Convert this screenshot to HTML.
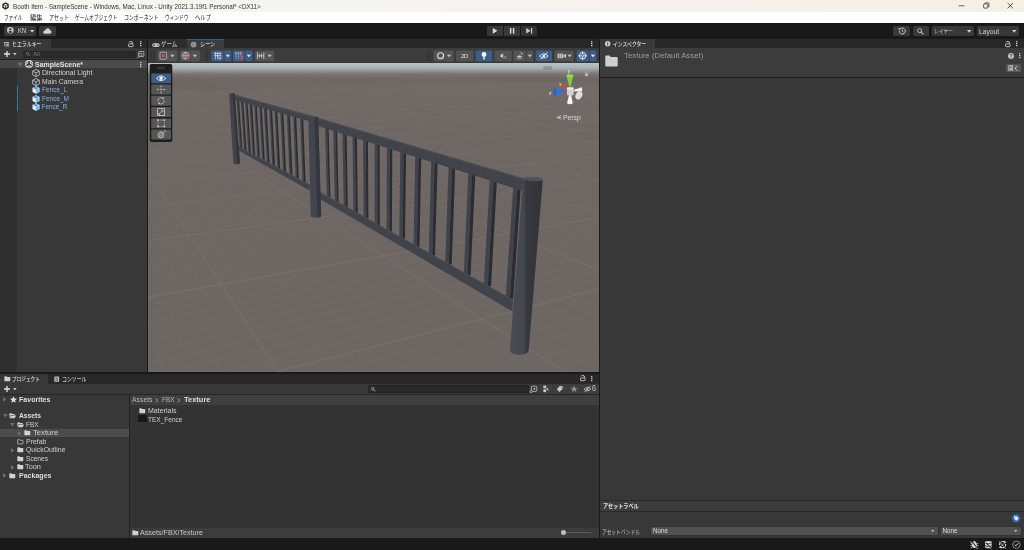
<!DOCTYPE html>
<html lang="ja"><head><meta charset="utf-8"><title>Booth Item - SampleScene - Unity</title><style>
html,body{margin:0;padding:0;background:#191919;}
body{width:1024px;height:550px;position:relative;overflow:hidden;font-family:"Liberation Sans","Noto Sans CJK JP",sans-serif;}
#app{position:absolute;left:0;top:0;width:1024px;height:550px;will-change:transform;}
.abs{position:absolute;display:block;}
.t{white-space:nowrap;transform-origin:0 50%;}
svg{overflow:visible}
</style></head><body>
<div id="app">
<div class="abs" style="left:0px;top:0px;width:1024px;height:12px;background:linear-gradient(90deg,#f6f6f2 0%,#f5f4ee 50%,#f3f0e4 100%);"></div>
<div class="abs" style="left:0px;top:12px;width:1024px;height:11px;background:#ffffff;"></div>
<svg class="abs" style="left:1.9px;top:2.2px" width="7" height="7.9" viewBox="0 0 8 9"><path d="M4 0.2L7.7 2.3V6.7L4 8.8L0.3 6.7V2.3Z" fill="#2c2c2c"/><path d="M4 2L6 3.1V5.7L4 6.9L2 5.7V3.1Z" fill="#f4f4f0"/><path d="M4 4.4V7M4 4.4L1.9 3.2M4 4.4L6.1 3.2" stroke="#2c2c2c" stroke-width="0.8" fill="none"/></svg>
<span class="abs t" style="left:12.5px;top:1.7000000000000002px;line-height:10px;font-size:6.5px;color:#333333;transform:scaleX(0.965);">Booth Item - SampleScene - Windows, Mac, Linux - Unity 2021.3.19f1 Personal* &lt;DX11&gt;</span>
<svg class="abs" style="left:0px;top:0px" width="1024" height="12" viewBox="0 0 1024 12"><path d="M958.8 5.8H964.4" stroke="#222" stroke-width="0.7"/><rect x="983.6" y="3.9" width="4.2" height="4.2" rx="0.9" fill="none" stroke="#222" stroke-width="0.7"/><path d="M985 3.9V3.4Q985 2.8 985.8 2.8H988.2Q989 2.8 989 3.6V6.2Q989 6.8 988.3 6.8H987.9" fill="none" stroke="#222" stroke-width="0.7"/><path d="M1007.6 3L1013 8.4M1013 3L1007.6 8.4" stroke="#222" stroke-width="0.75"/></svg>
<span class="abs t" style="left:4px;top:12.899999999999999px;line-height:10px;font-size:6.3px;color:#151515;transform:scaleX(0.734);">ファイル</span>
<span class="abs t" style="left:29.5px;top:12.899999999999999px;line-height:10px;font-size:6.3px;color:#151515;transform:scaleX(0.993);">編集</span>
<span class="abs t" style="left:49px;top:12.899999999999999px;line-height:10px;font-size:6.3px;color:#151515;transform:scaleX(0.798);">アセット</span>
<span class="abs t" style="left:75px;top:12.899999999999999px;line-height:10px;font-size:6.3px;color:#151515;transform:scaleX(0.752);">ゲームオブジェクト</span>
<span class="abs t" style="left:124px;top:12.899999999999999px;line-height:10px;font-size:6.3px;color:#151515;transform:scaleX(0.783);">コンポーネント</span>
<span class="abs t" style="left:165px;top:12.899999999999999px;line-height:10px;font-size:6.3px;color:#151515;transform:scaleX(0.746);">ウィンドウ</span>
<span class="abs t" style="left:195px;top:12.899999999999999px;line-height:10px;font-size:6.3px;color:#151515;transform:scaleX(0.847);">ヘルプ</span>
<div class="abs" style="left:0px;top:23px;width:1024px;height:16px;background:#191919;"></div>
<div class="abs" style="left:4px;top:26px;width:32px;height:9.9px;background:#383838;border-radius:1.5px"></div>
<svg class="abs" style="left:6.9px;top:27.3px" width="6.6" height="6.6" viewBox="0 0 6.6 6.6"><circle cx="3.3" cy="3.3" r="3.3" fill="#c8c8c8"/><circle cx="3.3" cy="2.4" r="1.15" fill="#383838"/><path d="M1.3 5.3Q1.4 3.9 3.3 3.9Q5.2 3.9 5.3 5.3Q4.4 6.1 3.3 6.1Q2.2 6.1 1.3 5.3Z" fill="#383838"/></svg>
<span class="abs t" style="left:17.7px;top:26.3px;line-height:10px;font-size:6.5px;color:#d4d4d4;transform:scaleX(0.908);">KN</span>
<svg class="abs" style="left:29.9px;top:29.8px" width="4.3" height="2.5799999999999996" viewBox="0 0 4.3 2.5799999999999996"><path d="M0 0H4.3L2.15 2.5799999999999996Z" fill="#d0d0d0"/></svg>
<div class="abs" style="left:39px;top:26px;width:16.5px;height:9.9px;background:#383838;border-radius:1.5px"></div>
<svg class="abs" style="left:42.6px;top:28.2px" width="8.8" height="6" viewBox="0 0 8.8 6"><path d="M2 5.8Q0.2 5.8 0.2 4.3Q0.2 3 1.6 2.8Q1.8 1.6 3 1.6Q3.4 0.2 5 0.2Q6.8 0.2 7 2.2Q8.6 2.3 8.6 4Q8.6 5.8 6.8 5.8Z" fill="#d0d0d0"/></svg>
<div class="abs" style="left:487px;top:26px;width:16.3px;height:9.9px;background:#383838;border-radius:1.5px 0 0 1.5px"></div>
<div class="abs" style="left:503.8px;top:26px;width:16.3px;height:9.9px;background:#383838;"></div>
<div class="abs" style="left:520.6px;top:26px;width:16.4px;height:9.9px;background:#323232;border-radius:0 1.5px 1.5px 0"></div>
<svg class="abs" style="left:0px;top:0px" width="1024" height="40" viewBox="0 0 1024 40"><path d="M492.8 27.9L497.4 30.8L492.8 33.7Z" fill="#dcdcdc"/><rect x="509.9" y="28" width="1.5" height="5.7" fill="#dcdcdc"/><rect x="512.8" y="28" width="1.5" height="5.7" fill="#dcdcdc"/><path d="M526.2 28L530.6 30.8L526.2 33.6Z" fill="#c8c8c8"/><rect x="530.9" y="28" width="1.3" height="5.6" fill="#c8c8c8"/></svg>
<div class="abs" style="left:893px;top:26px;width:17px;height:9.9px;background:#383838;border-radius:1.5px"></div>
<div class="abs" style="left:913px;top:26px;width:15.9px;height:9.9px;background:#383838;border-radius:1.5px"></div>
<svg class="abs" style="left:897.5px;top:27.2px" width="8" height="8" viewBox="0 0 8 8"><path d="M1.3 4A3 3 0 1 0 2.2 1.9" fill="none" stroke="#c8c8c8" stroke-width="1"/><path d="M0.2 1.2L2.9 1.2L1.2 3.6Z" fill="#c8c8c8"/><path d="M4.2 2.4V4.3L5.5 5" fill="none" stroke="#c8c8c8" stroke-width="0.8"/></svg>
<svg class="abs" style="left:917.2px;top:27.6px" width="7.0" height="7.0" viewBox="0 0 7 7"><circle cx="2.6" cy="2.6" r="2" fill="none" stroke="#c4c4c4" stroke-width="0.9"/><path d="M4.1 4.1L6.4 6.4" stroke="#c4c4c4" stroke-width="1.1"/></svg>
<div class="abs" style="left:932.2px;top:26px;width:41.7px;height:9.9px;background:#383838;border-radius:1.5px"></div>
<span class="abs t" style="left:934.3px;top:26.3px;line-height:10px;font-size:6.0px;color:#cccccc;transform:scaleX(0.797);">レイヤー</span>
<svg class="abs" style="left:967.4px;top:29.8px" width="4.4" height="2.64" viewBox="0 0 4.4 2.64"><path d="M0 0H4.4L2.2 2.64Z" fill="#d0d0d0"/></svg>
<div class="abs" style="left:977px;top:26px;width:41.7px;height:9.9px;background:#383838;border-radius:1.5px"></div>
<span class="abs t" style="left:978.9px;top:26.5px;line-height:10px;font-size:6.4px;color:#cccccc;transform:scaleX(1.052);">Layout</span>
<svg class="abs" style="left:1012.2px;top:29.8px" width="4.4" height="2.64" viewBox="0 0 4.4 2.64"><path d="M0 0H4.4L2.2 2.64Z" fill="#d0d0d0"/></svg>
<div class="abs" style="left:0px;top:39px;width:147px;height:333px;background:#383838;"></div>
<div class="abs" style="left:0px;top:38.9px;width:147px;height:9.5px;background:#282828;"></div>
<div class="abs" style="left:0px;top:38.9px;width:50.5px;height:9.5px;background:#383838;"></div>
<svg class="abs" style="left:4.3px;top:42.4px" width="5.4" height="4.6" viewBox="0 0 5.6 5"><path d="M0 0.7H5.4M1.8 2.5H5.4M1.8 4.3H5.4" stroke="#d4d4d4" stroke-width="1"/><path d="M0.4 1V4.3H1.8" fill="none" stroke="#d4d4d4" stroke-width="0.6"/></svg>
<span class="abs t" style="left:11.7px;top:39.1px;line-height:10px;font-size:6.0px;color:#dcdcdc;font-weight:500;transform:scaleX(0.819);">ヒエラルキー</span>
<svg class="abs" style="left:128.4px;top:41px" width="5.6" height="6.2" viewBox="0 0 5.6 6.2"><rect x="0.5" y="2.9" width="4.6" height="2.8" rx="0.7" fill="none" stroke="#c4c4c4" stroke-width="0.95"/><path d="M0.9 1.4Q1.3 0.5 2.8 0.5Q4.6 0.5 4.6 2V2.9" fill="none" stroke="#c4c4c4" stroke-width="0.95"/></svg>
<svg class="abs" style="left:139.7px;top:41px" width="1.4" height="5.8" viewBox="0 0 1.4 5.8"><rect x="0" y="0" width="1.4" height="1.25" fill="#cecece"/><rect x="0" y="2" width="1.4" height="1.25" fill="#cecece"/><rect x="0" y="4" width="1.4" height="1.25" fill="#cecece"/></svg>
<div class="abs" style="left:0px;top:48.4px;width:147px;height:11px;background:#383838;"></div>
<div class="abs" style="left:0px;top:59.3px;width:147px;height:0.7px;background:#232323;"></div>
<svg class="abs" style="left:3.9px;top:51.4px" width="6" height="6" viewBox="0 0 6 6"><path d="M3 0V6M0 3H6" stroke="#e2e2e2" stroke-width="1.3"/></svg>
<svg class="abs" style="left:12.5px;top:53.3px" width="3.7" height="2.22" viewBox="0 0 3.7 2.22"><path d="M0 0H3.7L1.85 2.22Z" fill="#cccccc"/></svg>
<div class="abs" style="left:23px;top:50.6px;width:113px;height:7.6px;background:#2a2a2a;border-radius:2px;box-shadow:0 0 0 0.5px #212121 inset"></div>
<svg class="abs" style="left:26.4px;top:52.3px" width="4.34" height="4.34" viewBox="0 0 7 7"><circle cx="2.6" cy="2.6" r="2" fill="none" stroke="#9a9a9a" stroke-width="0.9"/><path d="M4.1 4.1L6.4 6.4" stroke="#9a9a9a" stroke-width="1.1"/></svg>
<span class="abs t" style="left:33px;top:49.4px;line-height:10px;font-size:6.1px;color:#787878;">All</span>
<svg class="abs" style="left:136.5px;top:50.6px" width="7.5" height="7.5" viewBox="0 0 7.5 7.5"><rect x="1.8" y="0.5" width="5" height="5" rx="0.8" fill="none" stroke="#bdbdbd" stroke-width="0.8"/><circle cx="3.4" cy="3.9" r="1.6" fill="#383838" stroke="#bdbdbd" stroke-width="0.8"/><path d="M2.2 5.2L0.4 7" stroke="#bdbdbd" stroke-width="0.9"/></svg>
<div class="abs" style="left:0px;top:60px;width:17px;height:312px;background:#303030;"></div>
<div class="abs" style="left:0px;top:60.2px;width:147px;height:8.2px;background:#4b4b4b;"></div>
<div class="abs" style="left:0px;top:60.2px;width:17px;height:8.2px;background:#454545;"></div>
<svg class="abs" style="left:18.4px;top:62.8px" width="4.6" height="3.5" viewBox="0 0 4.6 3.5"><path d="M0 0H4.6L2.3 3.5Z" fill="#707070"/></svg>
<svg class="abs" style="left:25.2px;top:60.4px" width="8" height="8" viewBox="0 0 8 8"><circle cx="4" cy="4" r="3.9" fill="#e6e6e6"/><path d="M4 4L4 0.9M4 4L1.3 5.6M4 4L6.7 5.6" stroke="#333" stroke-width="1.5"/><circle cx="4" cy="4" r="1.2" fill="#333"/><path d="M2.2 1.6L1 3.9M5.8 1.6L7 3.9M2.6 6.9H5.4" stroke="#333" stroke-width="0.7"/></svg>
<span class="abs t" style="left:34.5px;top:59.599999999999994px;line-height:10px;font-size:6.5px;color:#e0e0e0;font-weight:700;transform:scaleX(1.071);">SampleScene*</span>
<svg class="abs" style="left:139.7px;top:62px" width="1.4" height="5.8" viewBox="0 0 1.4 5.8"><rect x="0" y="0" width="1.4" height="1.25" fill="#cecece"/><rect x="0" y="2" width="1.4" height="1.25" fill="#cecece"/><rect x="0" y="4" width="1.4" height="1.25" fill="#cecece"/></svg>
<svg class="abs" style="left:32.2px;top:69.1px" width="8" height="8" viewBox="0 0 8 8"><path d="M4 0.5L7.3 2.2V5.9L4 7.6L0.7 5.9V2.2Z" fill="none" stroke="#d6d6d6" stroke-width="0.75"/><path d="M0.7 2.2L4 3.9L7.3 2.2M4 3.9V7.6" fill="none" stroke="#d6d6d6" stroke-width="0.75"/></svg>
<span class="abs t" style="left:41.5px;top:68.3px;line-height:10px;font-size:6.4px;color:#d2d2d2;transform:scaleX(1.102);">Directional Light</span>
<svg class="abs" style="left:32.2px;top:77.6px" width="8" height="8" viewBox="0 0 8 8"><path d="M4 0.5L7.3 2.2V5.9L4 7.6L0.7 5.9V2.2Z" fill="none" stroke="#d6d6d6" stroke-width="0.75"/><path d="M0.7 2.2L4 3.9L7.3 2.2M4 3.9V7.6" fill="none" stroke="#d6d6d6" stroke-width="0.75"/></svg>
<span class="abs t" style="left:41.5px;top:76.8px;line-height:10px;font-size:6.4px;color:#d2d2d2;transform:scaleX(1.069);">Main Camera</span>
<svg class="abs" style="left:32.2px;top:86.1px" width="8" height="8" viewBox="0 0 8 8"><path d="M4 0.3L7.5 2.1V6L4 7.8L0.5 6V2.1Z" fill="#e6eef4"/><path d="M4 0.3L7.5 2.1L4 3.9L0.5 2.1Z" fill="#8fc4ea"/><path d="M4 3.9L7.5 2.1V6L4 7.8Z" fill="#6cc4f4"/><path d="M2 1.4L4 2.4L5.2 1.7" fill="none" stroke="#2a4a66" stroke-width="0.7"/></svg>
<span class="abs t" style="left:41.5px;top:85.3px;line-height:10px;font-size:6.4px;color:#83b1ea;transform:scaleX(1.025);">Fence_L</span>
<div class="abs" style="left:17.1px;top:86.39999999999999px;width:1.0px;height:7.6px;background:#2f7cad;"></div>
<svg class="abs" style="left:32.2px;top:94.6px" width="8" height="8" viewBox="0 0 8 8"><path d="M4 0.3L7.5 2.1V6L4 7.8L0.5 6V2.1Z" fill="#e6eef4"/><path d="M4 0.3L7.5 2.1L4 3.9L0.5 2.1Z" fill="#8fc4ea"/><path d="M4 3.9L7.5 2.1V6L4 7.8Z" fill="#6cc4f4"/><path d="M2 1.4L4 2.4L5.2 1.7" fill="none" stroke="#2a4a66" stroke-width="0.7"/></svg>
<span class="abs t" style="left:41.5px;top:93.8px;line-height:10px;font-size:6.4px;color:#83b1ea;transform:scaleX(1.013);">Fence_M</span>
<div class="abs" style="left:17.1px;top:94.89999999999999px;width:1.0px;height:7.6px;background:#2f7cad;"></div>
<svg class="abs" style="left:32.2px;top:103.1px" width="8" height="8" viewBox="0 0 8 8"><path d="M4 0.3L7.5 2.1V6L4 7.8L0.5 6V2.1Z" fill="#e6eef4"/><path d="M4 0.3L7.5 2.1L4 3.9L0.5 2.1Z" fill="#8fc4ea"/><path d="M4 3.9L7.5 2.1V6L4 7.8Z" fill="#6cc4f4"/><path d="M2 1.4L4 2.4L5.2 1.7" fill="none" stroke="#2a4a66" stroke-width="0.7"/></svg>
<span class="abs t" style="left:41.5px;top:102.3px;line-height:10px;font-size:6.4px;color:#83b1ea;">Fence_R</span>
<div class="abs" style="left:17.1px;top:103.39999999999999px;width:1.0px;height:7.6px;background:#2f7cad;"></div>
<div class="abs" style="left:147px;top:39px;width:1px;height:333px;background:#191919;"></div>
<div class="abs" style="left:599px;top:39px;width:1.2px;height:499px;background:#191919;"></div>
<div class="abs" style="left:0px;top:372px;width:600px;height:1.6px;background:#191919;"></div>
<div class="abs" style="left:148px;top:38.9px;width:451px;height:9.5px;background:#282828;"></div>
<div class="abs" style="left:148px;top:38.9px;width:39px;height:9.5px;background:#2d2d2d;"></div>
<div class="abs" style="left:187px;top:38.9px;width:36.9px;height:9.5px;background:#3c3c3c;"></div>
<div class="abs" style="left:187px;top:38.9px;width:36.9px;height:0.7px;background:#2f5d90;"></div>
<svg class="abs" style="left:151.6px;top:42.5px" width="7.8" height="4.5" viewBox="0 0 8.6 5"><rect x="0.2" y="0.4" width="8.2" height="4" rx="2" fill="#c8c8c8"/><circle cx="2.2" cy="2.4" r="0.9" fill="#2d2d2d"/><circle cx="6.3" cy="2.4" r="0.7" fill="#2d2d2d"/></svg>
<span class="abs t" style="left:160.8px;top:39.3px;line-height:10px;font-size:6.0px;color:#c8c8c8;font-weight:500;transform:scaleX(0.909);">ゲーム</span>
<svg class="abs" style="left:191.3px;top:41.7px" width="5.2" height="5.2" viewBox="0 0 5.8 5.8"><rect x="0.4" y="0.4" width="5" height="5" rx="1.6" fill="none" stroke="#c8c8c8" stroke-width="0.8"/><path d="M0.4 2.2H5.4M0.4 3.7H5.4M2.2 0.4V5.4M3.7 0.4V5.4" stroke="#c8c8c8" stroke-width="0.6"/></svg>
<span class="abs t" style="left:199.8px;top:39.3px;line-height:10px;font-size:6.0px;color:#d8d8d8;font-weight:500;transform:scaleX(0.859);">シーン</span>
<svg class="abs" style="left:591.0px;top:41px" width="1.4" height="5.8" viewBox="0 0 1.4 5.8"><rect x="0" y="0" width="1.4" height="1.25" fill="#cecece"/><rect x="0" y="2" width="1.4" height="1.25" fill="#cecece"/><rect x="0" y="4" width="1.4" height="1.25" fill="#cecece"/></svg>
<div class="abs" style="left:148px;top:48.4px;width:451px;height:14.2px;background:#3c3c3c;"></div>
<div class="abs" style="left:148px;top:62.6px;width:451px;height:0.6px;background:#232323;"></div>
<svg class="abs" style="left:148px;top:49px" width="451" height="14" viewBox="148 49 451 14"><rect x="150.8" y="51" width="0.7" height="9.6" fill="#2c2c2c"/><rect x="153" y="51" width="0.7" height="9.6" fill="#2c2c2c"/><rect x="205.2" y="51" width="0.7" height="9.6" fill="#2c2c2c"/><rect x="207.4" y="51" width="0.7" height="9.6" fill="#2c2c2c"/><rect x="427.6" y="51" width="0.7" height="9.6" fill="#2c2c2c"/><rect x="429.6" y="51" width="0.7" height="9.6" fill="#2c2c2c"/><rect x="157.4" y="50.4" width="20.0" height="10.8" rx="1.2" fill="#535353"/><rect x="160" y="52.2" width="6.6" height="7" rx="0.8" fill="none" stroke="#c8c8c8" stroke-width="0.7"/><rect x="161.9" y="54.3" width="2.8" height="2.8" fill="#d0593f"/><path d="M170.3 54.699999999999996H174.5L172.4 57.199999999999996Z" fill="#c8c8c8"/><rect x="179.9" y="50.4" width="20.0" height="10.8" rx="1.2" fill="#535353"/><circle cx="185.6" cy="55.7" r="3.5" fill="none" stroke="#c8c8c8" stroke-width="0.7"/><path d="M185.6 52.2V59.2M182.1 55.7H189" stroke="#c8c8c8" stroke-width="0.6"/><ellipse cx="185.6" cy="55.7" rx="1.7" ry="3.5" fill="none" stroke="#c8c8c8" stroke-width="0.5"/><circle cx="187.8" cy="57.6" r="1.6" fill="#d0593f"/><path d="M192.8 54.699999999999996H197.0L194.9 57.199999999999996Z" fill="#c8c8c8"/><rect x="211.5" y="50.4" width="12.2" height="10.8" rx="1.2" fill="#3d5c87"/><rect x="224.4" y="50.4" width="6.8" height="10.8" rx="1.2" fill="#3d5c87"/><path d="M214 53.4H221.4M214 55.6H221.4M215.4 52V59.4M217.7 52V59.4M220 52V57" stroke="#dfe6ee" stroke-width="0.7"/><path d="M218.4 56.8L220 59.4L221.6 56.8" fill="none" stroke="#dfe6ee" stroke-width="0.8"/><path d="M225.70000000000002 54.699999999999996H229.9L227.8 57.199999999999996Z" fill="#dfe6ee"/><rect x="233" y="50.4" width="11.4" height="10.8" rx="1.2" fill="#3d5c87"/><rect x="245.1" y="50.4" width="7.5" height="10.8" rx="1.2" fill="#3d5c87"/><path d="M236 52V59.4M238.4 52V59.4M240.8 52V55" stroke="#dfe6ee" stroke-width="0.7" stroke-dasharray="1 0.8"/><path d="M235 53.2H242.4" stroke="#dfe6ee" stroke-width="0.7" stroke-dasharray="1 0.8"/><path d="M239.6 56.2Q242.6 55.2 242.6 57.4Q242.6 59.4 239.8 58.8" fill="none" stroke="#e0573c" stroke-width="1.1"/><path d="M246.8 54.699999999999996H251.0L248.9 57.199999999999996Z" fill="#dfe6ee"/><rect x="254.9" y="50.4" width="19.4" height="10.8" rx="1.2" fill="#535353"/><path d="M257.4 52.4V59.2M263.8 52.4V59.2M257.4 55.8H263.8" stroke="#c8c8c8" stroke-width="0.9"/><path d="M259.4 53.6V58M261.6 53.6V58" stroke="#c8c8c8" stroke-width="0.8"/><path d="M267.5 54.699999999999996H271.70000000000005L269.6 57.199999999999996Z" fill="#c8c8c8"/><rect x="433.8" y="50.4" width="19.8" height="10.8" rx="1.2" fill="#535353"/><circle cx="440.6" cy="55.8" r="3" fill="none" stroke="#e0e0e0" stroke-width="1.1"/><path d="M438.4 57.6Q440.8 58.6 442.8 56.6" stroke="#9a9a9a" stroke-width="1" fill="none"/><path d="M446.9 54.699999999999996H451.1L449 57.199999999999996Z" fill="#c8c8c8"/><rect x="456.1" y="50.4" width="17.2" height="10.8" rx="1.2" fill="#535353"/><rect x="475.6" y="50.4" width="16.6" height="10.8" rx="1.2" fill="#3d5c87"/><path d="M484 52Q486.4 52 486.4 54.4Q486.4 55.6 485.2 56.6V57.6H482.8V56.6Q481.6 55.6 481.6 54.4Q481.6 52 484 52Z" fill="#f0f4f8"/><rect x="483" y="58.2" width="2" height="1.2" fill="#f0f4f8"/><rect x="494.5" y="50.4" width="17.2" height="10.8" rx="1.2" fill="#535353"/><path d="M500.4 54.6H501.6L503.2 53.2V58.4L501.6 57H500.4Z" fill="#c8c8c8"/><path d="M504.4 56.4L506.2 58.4M506.2 56.4L504.4 58.4" stroke="#c8c8c8" stroke-width="0.6"/><rect x="513.4" y="50.4" width="12.4" height="10.8" rx="1.2" fill="#535353"/><rect x="526.5" y="50.4" width="6.6" height="10.8" rx="1.2" fill="#535353"/><path d="M516.6 56.6L519.4 55.2L522.4 56.6L519.4 58Z" fill="#c8c8c8"/><path d="M516.6 58L519.4 59.4L522.4 58" fill="none" stroke="#c8c8c8" stroke-width="0.6"/><path d="M520.6 52L521.2 53.4L522.6 53.6L521.4 54.4" stroke="#c8c8c8" stroke-width="0.7" fill="none"/><path d="M527.6999999999999 54.699999999999996H531.9L529.8 57.199999999999996Z" fill="#c8c8c8"/><rect x="535.7" y="50.4" width="16.3" height="10.8" rx="1.2" fill="#3d5c87"/><path d="M539.6 56Q543.8 51.6 548 56Q543.8 60.2 539.6 56Z" fill="none" stroke="#eef2f6" stroke-width="0.9"/><circle cx="543.8" cy="56" r="1.3" fill="#eef2f6"/><path d="M540.4 59.4L547.4 52.2" stroke="#eef2f6" stroke-width="0.9"/><rect x="554.6" y="50.4" width="19.0" height="10.8" rx="1.2" fill="#535353"/><rect x="557.6" y="53.6" width="5.6" height="4.6" fill="#c8c8c8"/><path d="M563.6 55.2L566 53.8V58L563.6 56.6Z" fill="#c8c8c8"/><path d="M559.4 53.6V58.2M561.2 53.6V58.2" stroke="#585858" stroke-width="0.5"/><path d="M567.5 54.699999999999996H571.7L569.6 57.199999999999996Z" fill="#c8c8c8"/><rect x="576.6" y="50.4" width="12.1" height="10.8" rx="1.2" fill="#3d5c87"/><rect x="589.5" y="50.4" width="7.0" height="10.8" rx="1.2" fill="#3d5c87"/><circle cx="582.6" cy="55.8" r="3.2" fill="none" stroke="#eef2f6" stroke-width="0.9"/><path d="M582.6 51.4V60.2M578.2 55.8H587" stroke="#eef2f6" stroke-width="0.8"/><circle cx="582.6" cy="55.8" r="1" fill="#3d5c87" stroke="#eef2f6" stroke-width="0.6"/><path d="M590.9 54.699999999999996H595.1L593 57.199999999999996Z" fill="#eef2f6"/></svg><span class="abs t" style="left:460.9px;top:50.9px;line-height:10px;font-size:5.8px;color:#e4e4e4">2D</span>
<svg class="abs" style="left:148px;top:63px" width="451" height="309" viewBox="148 63 451 309">
<defs><linearGradient id="sky" x1="0" y1="0" x2="0" y2="1"><stop offset="0" stop-color="#b8c3c4"/><stop offset="0.3" stop-color="#aab2b3"/><stop offset="0.5" stop-color="#8f9393"/><stop offset="0.7" stop-color="#787372"/><stop offset="1" stop-color="#6d6663"/></linearGradient><linearGradient id="gfade" x1="0" y1="63" x2="0" y2="372" gradientUnits="userSpaceOnUse"><stop offset="0" stop-color="#fff" stop-opacity="0"/><stop offset="0.1" stop-color="#fff" stop-opacity="0.2"/><stop offset="0.35" stop-color="#fff" stop-opacity="0.6"/><stop offset="0.75" stop-color="#fff" stop-opacity="1"/><stop offset="1" stop-color="#fff" stop-opacity="1"/></linearGradient><mask id="gm" maskUnits="userSpaceOnUse" x="148" y="63" width="451" height="309"><rect x="148" y="63" width="451" height="309" fill="url(#gfade)"/></mask><linearGradient id="post" x1="0" y1="0" x2="1" y2="0"><stop offset="0" stop-color="#484b53"/><stop offset="0.42" stop-color="#44474f"/><stop offset="0.5" stop-color="#36383f"/><stop offset="1" stop-color="#313338"/></linearGradient></defs>
<rect x="148" y="63" width="451" height="309" fill="#6d6663"/>
<rect x="148" y="63" width="451" height="16" fill="url(#sky)"/>
<g mask="url(#gm)"><path d="M69.1 58.9L-2877.0 598.2M69.1 58.9L-2875.3 607.1M69.1 58.9L-2873.6 616.3M69.1 58.9L-2871.8 625.7M69.1 59.0L-2869.9 635.5M69.1 59.0L-2867.9 645.6M69.1 59.0L-2865.8 656.1M69.1 59.0L-2861.2 678.2M69.1 59.1L-2858.7 689.9M69.1 59.1L-2856.1 702.0M69.1 59.1L-2853.3 714.5M69.1 59.1L-2850.3 727.6M69.1 59.1L-2847.2 741.1M69.1 59.2L-2843.9 755.2M69.1 59.2L-2840.3 769.9M69.1 59.2L-2836.5 785.2M69.2 59.3L-2828.2 817.7M69.2 59.3L-2823.6 835.1M69.2 59.3L-2818.7 853.2M69.2 59.4L-2813.4 872.2M69.2 59.4L-2807.7 892.0M69.2 59.4L-2801.6 912.8M69.2 59.5L-2795.1 934.7M69.2 59.5L-2788.0 957.6M69.2 59.5L-2780.3 981.6M69.3 59.6L-2762.9 1033.6M69.3 59.7L-2753.1 1061.8M69.3 59.7L-2742.4 1091.4M69.3 59.8L-2730.7 1122.8M69.3 59.8L-2717.9 1155.9M1502.1 62.5L2788.5 2767.2M69.4 59.9L-2703.8 1191.1M1501.4 62.8L2363.5 2931.0M69.4 60.0L-2688.3 1228.3M1500.6 63.0L1873.6 3034.6M69.4 60.0L-2671.2 1267.8M1499.8 63.0L1351.6 3054.3M69.5 60.1L-2652.3 1309.8M1498.9 62.9L842.6 2985.1M69.5 60.2L-2608.0 1402.1M1497.5 62.3L5.2 2659.1M69.6 60.3L-2582.0 1452.8M1497.0 62.0L-299.6 2458.3M69.6 60.4L-2552.9 1507.0M1496.6 61.7L-536.8 2260.6M69.7 60.5L-2520.2 1564.8M1496.3 61.4L-719.6 2076.2M69.7 60.6L-2483.3 1626.5M1496.1 61.1L-860.4 1909.6M69.8 60.7L-2441.7 1692.4M1495.9 60.8L-969.6 1761.3M69.9 60.8L-2394.5 1762.8M1495.7 60.6L-1054.9 1630.3M70.0 61.0L-2340.9 1837.9M1495.6 60.4L-1122.5 1514.9M70.1 61.1L-2279.8 1918.0M1495.5 60.3L-1176.5 1413.2M70.3 61.4L-2130.1 2093.1M1495.4 60.0L-1255.9 1243.3M70.5 61.6L-2038.6 2188.0M1495.4 59.9L-1285.5 1172.1M70.7 61.7L-1933.6 2287.3M1495.3 59.8L-1310.1 1108.4M70.9 61.9L-1813.3 2390.0M1495.3 59.7L-1330.8 1051.2M71.1 62.1L-1675.8 2494.8M1495.3 59.6L-1348.4 999.5M71.3 62.2L-1519.4 2599.9M1495.2 59.5L-1363.5 952.7M71.6 62.4L-1342.4 2702.6M1495.2 59.4L-1376.4 910.2M72.0 62.6L-1144.3 2799.5M1495.2 59.4L-1387.6 871.3M72.3 62.7L-925.0 2886.8M1495.2 59.3L-1397.4 835.7M73.2 62.9L-430.7 3015.2M1495.1 59.2L-1413.6 772.9M73.6 63.0L-163.5 3048.6M1495.1 59.1L-1420.3 745.0M74.1 63.0L109.4 3057.8M1495.1 59.1L-1426.2 719.2M74.5 63.0L381.5 3042.2M1495.1 59.1L-1431.5 695.2M75.0 62.9L646.1 3002.9M1495.1 59.0L-1436.3 672.8M75.4 62.8L897.6 2942.7M1495.1 59.0L-1440.6 652.0M75.8 62.7L1131.7 2865.4M1495.1 59.0L-1444.5 632.4M76.1 62.5L1345.6 2775.2M1495.1 58.9L-1448.0 614.1M76.4 62.4L1538.3 2676.4M1495.1 58.9L-1451.2 596.9M77.0 62.0L1861.2 2467.6M1495.1 58.8L-1456.8 565.5M77.2 61.8L1994.0 2363.1M1495.1 58.8L-1459.2 551.1M77.4 61.7L2110.1 2261.2M1495.1 58.8L-1461.4 537.5M77.6 61.5L2211.5 2163.0M1495.1 58.8L-1463.5 524.6M77.7 61.4L2299.9 2069.4M1495.1 58.8L-1465.4 512.4M77.8 61.2L2377.0 1980.6M1495.1 58.7L-1467.1 500.8M78.0 61.1L2444.4 1896.8M1495.1 58.7L-1468.8 489.7M78.0 60.9L2503.5 1818.0M1495.0 58.7L-1470.3 479.2M78.1 60.8L2555.3 1744.1M1495.0 58.7L-1471.7 469.2M78.3 60.6L2641.3 1610.1M1495.0 58.7L-1474.2 450.6M78.3 60.5L2677.0 1549.4M1495.0 58.6L-1475.3 441.8M78.4 60.4L2708.7 1492.6M1495.0 58.6L-1476.4 433.5M78.4 60.3L2737.0 1439.4M1495.0 58.6L-1477.4 425.5M78.5 60.2L2762.3 1389.5M1495.0 58.6L-1478.3 417.9M78.5 60.1L2785.0 1342.7M1495.0 58.6L-1479.2 410.5M78.6 60.1L2805.4 1298.7M1495.0 58.6L-1480.0 403.4M78.6 60.0L2823.8 1257.4M1495.0 58.6L-1480.8 396.7M78.6 59.9L2840.5 1218.5M1495.0 58.6L-1481.6 390.1M78.7 59.8L2869.3 1147.2M1495.0 58.5L-1482.9 377.8M78.7 59.8L2881.8 1114.5M1495.0 58.5L-1483.5 372.0M78.7 59.7L2893.2 1083.6M1495.0 58.5L-1484.1 366.4M78.7 59.7L2903.7 1054.3M1495.0 58.5L-1484.7 361.0M78.7 59.6L2913.3 1026.6M1495.0 58.5L-1485.2 355.7M78.7 59.6L2922.2 1000.3M1495.0 58.5L-1485.7 350.7M78.8 59.5L2930.3 975.3M1495.0 58.5L-1486.2 345.8M78.8 59.5L2937.8 951.5M1495.0 58.5L-1486.6 341.0M78.8 59.5L2944.8 928.9M1495.0 58.5L-1487.0 336.5M78.8 59.4L2957.2 886.8M1495.0 58.4L-1487.8 327.7M78.8 59.3L2962.8 867.2M1495.0 58.4L-1488.2 323.6M78.8 59.3L2968.0 848.4M1495.0 58.4L-1488.6 319.5M78.8 59.3L2972.8 830.5M1495.0 58.4L-1488.9 315.6M78.8 59.3L2977.4 813.3M1495.0 58.4L-1489.2 311.8M78.8 59.2L2981.6 796.9M1495.0 58.4L-1489.6 308.1M78.9 59.2L2985.5 781.1M1495.0 58.4L-1489.9 304.5M78.9 59.2L2989.3 766.0M1495.0 58.4L-1490.1 301.1M78.9 59.2L2992.7 751.5M1495.0 58.4L-1490.4 297.7M78.9 59.1L2999.1 724.1M1495.0 58.4L-1490.9 291.2M78.9 59.1L3002.0 711.2M1495.0 58.4L-1491.2 288.0M78.9 59.1L3004.8 698.8M1495.0 58.4L-1491.4 285.0M78.9 59.0L3007.4 686.8M1495.0 58.4L-1491.6 282.0M78.9 59.0L3009.8 675.3M1495.0 58.4L-1491.8 279.2M78.9 59.0L3012.1 664.1M1495.0 58.4L-1492.0 276.4M78.9 59.0L3014.3 653.4M1495.0 58.4L-1492.2 273.6M78.9 59.0L3016.4 643.0M1495.0 58.4L-1492.4 270.9M78.9 59.0L3018.4 633.0M1495.0 58.4L-1492.6 268.3M78.9 58.9L3022.1 613.9M1495.0 58.3L-1493.0 263.3M78.9 58.9L3023.8 604.8M1495.0 58.3L-1493.1 260.9M78.9 58.9L3025.4 596.0M1495.0 58.3L-1493.3 258.5M78.9 58.9L3026.9 587.5M1495.0 58.3L-1493.4 256.2M78.9 58.9L3028.4 579.2M1495.0 58.3L-1493.6 253.9M78.9 58.9L3029.8 571.2M1495.0 58.3L-1493.7 251.7M78.9 58.8L3031.1 563.4M1495.0 58.3L-1493.9 249.6M78.9 58.8L3032.4 555.9M1495.0 58.3L-1494.0 247.5M78.9 58.8L3033.6 548.5M1495.0 58.3L-1494.1 245.4M78.9 58.8L3035.9 534.5M1495.0 58.3L-1494.4 241.4M78.9 58.8L3037.0 527.8M1495.0 58.3L-1494.5 239.4M78.9 58.8L3038.0 521.2M1495.0 58.3L-1494.6 237.5M78.9 58.8L3039.0 514.9M1495.0 58.3L-1494.7 235.7M78.9 58.8L3040.0 508.7M1495.0 58.3L-1494.8 233.9M78.9 58.7L3040.9 502.7M1495.0 58.3L-1494.9 232.1M78.9 58.7L3041.7 496.8M1495.0 58.3L-1495.0 230.3M78.9 58.7L3042.6 491.1M1495.0 58.3L-1495.1 228.6M78.9 58.7L3043.4 485.5M1495.0 58.3L-1495.2 226.9M79.0 58.7L3044.9 474.8M1495.0 58.3L-1495.4 223.7M79.0 58.7L3045.6 469.6M1495.0 58.3L-1495.5 222.1M79.0 58.7L3046.3 464.6M1495.0 58.3L-1495.6 220.5M79.0 58.7L3047.0 459.6M1495.0 58.3L-1495.7 219.0M79.0 58.7L3047.6 454.8M1495.0 58.3L-1495.8 217.5M79.0 58.7L3048.3 450.2M1495.0 58.3L-1495.8 216.1M79.0 58.6L3048.9 445.6M1495.0 58.3L-1495.9 214.6M79.0 58.6L3049.4 441.1M1495.0 58.3L-1496.0 213.2M79.0 58.6L3050.0 436.7M1495.0 58.3L-1496.1 211.8M79.0 58.6L3051.1 428.3M1495.0 58.3L-1496.2 209.1M79.0 58.6L3051.6 424.2M1495.0 58.2L-1496.3 207.8M79.0 58.6L3052.1 420.2M1495.0 58.2L-1496.3 206.5M79.0 58.6L3052.5 416.2M1495.0 58.2L-1496.4 205.2M79.0 58.6L3053.0 412.4M1495.0 58.2L-1496.4 204.0M79.0 58.6L3053.4 408.7M1495.0 58.2L-1496.5 202.7M79.0 58.6L3053.9 405.0M1495.0 58.2L-1496.6 201.5M79.0 58.6L3054.3 401.4M1495.0 58.2L-1496.6 200.3M79.0 58.6L3054.7 397.9M1495.0 58.2L-1496.7 199.2M79.0 58.6L3055.5 391.0M1495.0 58.2L-1496.8 196.9M79.0 58.5L3055.8 387.7M1495.0 58.2L-1496.8 195.8M79.0 58.5L3056.2 384.4M1495.0 58.2L-1496.9 194.7M79.0 58.5L3056.5 381.3M1495.0 58.2L-1496.9 193.6M79.0 58.5L3056.9 378.1M1495.0 58.2L-1497.0 192.5M79.0 58.5L3057.2 375.1M1495.0 58.2L-1497.0 191.5M79.0 58.5L3057.5 372.0M1495.0 58.2L-1497.1 190.4M79.0 58.5L3057.8 369.1M1495.0 58.2L-1497.1 189.4M79.0 58.5L3058.1 366.2M1495.0 58.2L-1497.2 188.4M79.0 58.5L3058.7 360.5M1495.0 58.2L-1497.2 186.5M79.0 58.5L3059.0 357.8M1495.0 58.2L-1497.3 185.5M79.0 58.5L3059.3 355.1M1495.0 58.2L-1497.3 184.6M79.0 58.5L3059.5 352.5M1495.0 58.2L-1497.4 183.6M79.0 58.5L3059.8 349.9M1495.0 58.2L-1497.4 182.7M79.0 58.5L3060.0 347.3M1495.0 58.2L-1497.4 181.8M79.0 58.5L3060.3 344.8M1495.0 58.2L-1497.5 180.9M79.0 58.5L3060.5 342.3M1495.0 58.2L-1497.5 180.1M79.0 58.5L3060.7 339.9M1495.0 58.2L-1497.6 179.2M79.0 58.5L3061.2 335.2M1495.0 58.2L-1497.6 177.5M79.0 58.5L3061.4 332.9M1495.0 58.2L-1497.7 176.7M79.0 58.5L3061.6 330.6M1495.0 58.2L-1497.7 175.9M79.0 58.5L3061.8 328.4M1495.0 58.2L-1497.7 175.1M79.0 58.4L3062.0 326.2M1495.0 58.2L-1497.7 174.3M79.0 58.4L3062.2 324.0M1495.0 58.2L-1497.8 173.5M79.0 58.4L3062.4 321.9M1495.0 58.2L-1497.8 172.7M79.0 58.4L3062.6 319.8M1495.0 58.2L-1497.8 172.0M79.0 58.4L3062.7 317.7M1495.0 58.2L-1497.9 171.2M79.0 58.4L3063.1 313.7M1495.0 58.2L-1497.9 169.7M79.0 58.4L3063.3 311.7M1495.0 58.2L-1497.9 169.0M79.0 58.4L3063.4 309.8M1495.0 58.2L-1498.0 168.3M79.0 58.4L3063.6 307.9M1495.0 58.2L-1498.0 167.6M79.0 58.4L3063.7 306.0M1495.0 58.2L-1498.0 166.9M79.0 58.4L3063.9 304.2M1495.0 58.2L-1498.0 166.2M79.0 58.4L3064.0 302.3M1495.0 58.2L-1498.1 165.5M79.0 58.4L3064.2 300.5M1495.0 58.2L-1498.1 164.9M79.0 58.4L3064.3 298.8M1495.0 58.2L-1498.1 164.2M79.0 58.4L3064.6 295.3M1495.0 58.2L-1498.2 162.9M79.0 58.4L3064.7 293.6M1495.0 58.2L-1498.2 162.3M79.0 58.4L3064.9 291.9M1495.0 58.2L-1498.2 161.6M79.0 58.4L3065.0 290.3M1495.0 58.2L-1498.2 161.0M79.0 58.4L3065.1 288.7M1495.0 58.2L-1498.3 160.4M79.0 58.4L3065.2 287.1M1495.0 58.2L-1498.3 159.8M79.0 58.4L3065.4 285.5M1495.0 58.2L-1498.3 159.2M79.0 58.4L3065.5 283.9M1495.0 58.2L-1498.3 158.6M79.0 58.4L3065.6 282.4M1495.0 58.2L-1498.3 158.0M79.0 58.4L3065.8 279.4M1495.0 58.2L-1498.4 156.9M79.0 58.4L3065.9 277.9M1495.0 58.2L-1498.4 156.3M79.0 58.4L3066.0 276.4M1495.0 58.2L-1498.4 155.7M79.0 58.4L3066.1 275.0M1495.0 58.2L-1498.4 155.2M79.0 58.4L3066.2 273.6M1495.0 58.2L-1498.4 154.6M79.0 58.4L3066.3 272.2M1495.0 58.2L-1498.5 154.1M79.0 58.4L3066.4 270.8M1495.0 58.2L-1498.5 153.5M79.0 58.4L3066.5 269.4M1495.0 58.2L-1498.5 153.0M79.0 58.4L3066.6 268.1M1495.0 58.2L-1498.5 152.5M79.0 58.3L3066.8 265.4M1495.0 58.2L-1498.5 151.5M79.0 58.3L3066.9 264.1M1495.0 58.2L-1498.6 151.0M79.0 58.3L3067.0 262.9M1495.0 58.2L-1498.6 150.5M79.0 58.3L3067.1 261.6M1495.0 58.2L-1498.6 150.0M79.0 58.3L3067.2 260.3M1495.0 58.2L-1498.6 149.5M79.0 58.3L3067.3 259.1M1495.0 58.2L-1498.6 149.0M79.0 58.3L3067.3 257.9M1495.0 58.2L-1498.6 148.5M79.0 58.3L3067.4 256.7M1495.0 58.2L-1498.6 148.0M79.0 58.3L3067.5 255.5M1495.0 58.1L-1498.7 147.6M79.0 58.3L3067.6 253.2M1495.0 58.1L-1498.7 146.6M79.0 58.3L3067.7 252.0M1495.0 58.1L-1498.7 146.2M79.0 58.3L3067.8 250.9M1495.0 58.1L-1498.7 145.7M79.0 58.3L3067.9 249.8M1495.0 58.1L-1498.7 145.3M79.0 58.3L3067.9 248.6M1495.0 58.1L-1498.7 144.8M79.0 58.3L3068.0 247.5M1495.0 58.1L-1498.8 144.4M79.0 58.3L3068.1 246.5M1495.0 58.1L-1498.8 144.0M79.0 58.3L3068.1 245.4M1495.0 58.1L-1498.8 143.5M79.0 58.3L3068.2 244.3M1495.0 58.1L-1498.8 143.1M79.0 58.3L3068.3 242.2M1495.0 58.1L-1498.8 142.3M79.0 58.3L3068.4 241.2M1495.0 58.1L-1498.8 141.9M79.0 58.3L3068.5 240.2M1495.0 58.1L-1498.8 141.5M79.0 58.3L3068.5 239.2M1495.0 58.1L-1498.9 141.1M79.0 58.3L3068.6 238.2M1495.0 58.1L-1498.9 140.7M79.0 58.3L3068.6 237.2M1495.0 58.1L-1498.9 140.3M79.0 58.3L3068.7 236.3M1495.0 58.1L-1498.9 139.9M79.0 58.3L3068.8 235.3M1495.0 58.1L-1498.9 139.5M79.0 58.3L3068.8 234.4M1495.0 58.1L-1498.9 139.1M79.0 58.3L3068.9 232.5M1495.0 58.1L-1498.9 138.3M79.0 58.3L3069.0 231.6M1495.0 58.1L-1498.9 138.0M79.0 58.3L3069.0 230.7M1495.0 58.1L-1498.9 137.6M79.0 58.3L3069.1 229.8M1495.0 58.1L-1499.0 137.2M79.0 58.3L3069.1 228.9M1495.0 58.1L-1499.0 136.8M79.0 58.3L3069.2 228.0M1495.0 58.1L-1499.0 136.5M79.0 58.3L3069.2 227.1M1495.0 58.1L-1499.0 136.1M79.0 58.3L3069.3 226.2M1495.0 58.1L-1499.0 135.8M79.0 58.3L3069.3 225.4M1495.0 58.1L-1499.0 135.4M79.0 58.3L3069.4 223.7M1495.0 58.1L-1499.0 134.7M79.0 58.3L3069.5 222.9M1495.0 58.1L-1499.0 134.4M79.0 58.3L3069.5 222.1M1495.0 58.1L-1499.0 134.1M79.0 58.3L3069.6 221.2M1495.0 58.1L-1499.0 133.7M79.0 58.3L3069.6 220.4M1495.0 58.1L-1499.1 133.4M79.0 58.3L3069.6 219.6M1495.0 58.1L-1499.1 133.1M79.0 58.3L3069.7 218.9M1495.0 58.1L-1499.1 132.7M79.0 58.3L3069.7 218.1M1495.0 58.1L-1499.1 132.4M79.0 58.3L3069.8 217.3M1495.0 58.1L-1499.1 132.1" stroke="#fff" stroke-opacity="0.045" stroke-width="0.6" fill="none"/><path d="M69.1 59.0L-2863.5 667.0M69.2 59.2L-2832.5 801.1M69.3 59.6L-2772.0 1007.0M69.5 60.2L-2631.4 1354.5M1498.1 62.6L386.7 2843.8M70.2 61.2L-2210.0 2003.1M1495.5 60.1L-1220.2 1323.2M72.7 62.8L-686.1 2960.1M1495.2 59.2L-1406.0 803.0M76.7 62.2L1709.8 2572.8M1495.1 58.9L-1454.1 580.8M78.2 60.7L2601.0 1674.9M1495.0 58.7L-1473.0 459.7M78.6 59.9L2855.6 1181.8M1495.0 58.5L-1482.2 383.9M78.8 59.4L2951.3 907.4M1495.0 58.5L-1487.5 332.0M78.9 59.1L2996.0 737.6M1495.0 58.4L-1490.7 294.4M78.9 58.9L3020.3 623.3M1495.0 58.3L-1492.8 265.8M78.9 58.8L3034.8 541.4M1495.0 58.3L-1494.3 243.4M79.0 58.7L3044.2 480.1M1495.0 58.3L-1495.3 225.3M79.0 58.6L3050.5 432.4M1495.0 58.3L-1496.1 210.4M79.0 58.6L3055.1 394.4M1495.0 58.2L-1496.7 198.0M79.0 58.5L3058.4 363.3M1495.0 58.2L-1497.2 187.4M79.0 58.5L3061.0 337.5M1495.0 58.2L-1497.6 178.4M79.0 58.4L3062.9 315.7M1495.0 58.2L-1497.9 170.5M79.0 58.4L3064.5 297.0M1495.0 58.2L-1498.1 163.5M79.0 58.4L3065.7 280.9M1495.0 58.2L-1498.4 157.4M79.0 58.3L3066.7 266.8M1495.0 58.2L-1498.5 152.0M79.0 58.3L3067.6 254.3M1495.0 58.1L-1498.7 147.1M79.0 58.3L3068.3 243.3M1495.0 58.1L-1498.8 142.7M79.0 58.3L3068.9 233.4M1495.0 58.1L-1498.9 138.7M79.0 58.3L3069.4 224.5M1495.0 58.1L-1499.0 135.1" stroke="#fff" stroke-opacity="0.105" stroke-width="0.8" fill="none"/></g>
<polygon points="232.3,98.7 233.3,98.7 236.6,146.4 235.7,146.4" fill="#40434a"/>
<polygon points="233.3,98.7 234.7,98.7 238.0,146.4 236.6,146.4" fill="#2a2c31"/>
<polygon points="236.6,99.9 237.6,99.9 240.9,148.7 239.9,148.7" fill="#40434a"/>
<polygon points="237.6,99.9 239.0,99.9 242.3,148.7 240.9,148.7" fill="#2a2c31"/>
<polygon points="240.9,101.1 241.9,101.1 245.2,151.0 244.1,151.0" fill="#40434a"/>
<polygon points="241.9,101.1 243.3,101.1 246.6,151.0 245.2,151.0" fill="#2a2c31"/>
<polygon points="245.2,102.4 246.2,102.4 249.4,153.3 248.4,153.3" fill="#40434a"/>
<polygon points="246.2,102.4 247.6,102.4 250.9,153.3 249.4,153.3" fill="#2a2c31"/>
<polygon points="249.4,103.6 250.5,103.6 253.7,155.6 252.6,155.6" fill="#40434a"/>
<polygon points="250.5,103.6 252.0,103.6 255.2,155.6 253.7,155.6" fill="#2a2c31"/>
<polygon points="254.2,104.9 255.3,104.9 258.4,158.2 257.3,158.2" fill="#40434a"/>
<polygon points="255.3,104.9 256.8,104.9 259.9,158.2 258.4,158.2" fill="#2a2c31"/>
<polygon points="259.1,106.3 260.2,106.3 263.3,160.8 262.2,160.8" fill="#40434a"/>
<polygon points="260.2,106.3 261.7,106.3 264.8,160.8 263.3,160.8" fill="#2a2c31"/>
<polygon points="263.8,107.7 265.0,107.7 268.0,163.3 266.9,163.3" fill="#40434a"/>
<polygon points="265.0,107.7 266.6,107.7 269.6,163.3 268.0,163.3" fill="#2a2c31"/>
<polygon points="269.2,109.2 270.4,109.2 273.3,166.2 272.2,166.2" fill="#40434a"/>
<polygon points="270.4,109.2 272.0,109.2 275.0,166.2 273.3,166.2" fill="#2a2c31"/>
<polygon points="274.5,110.7 275.7,110.7 278.5,169.0 277.3,169.0" fill="#40434a"/>
<polygon points="275.7,110.7 277.3,110.7 280.2,169.0 278.5,169.0" fill="#2a2c31"/>
<polygon points="280.3,112.4 281.6,112.4 284.3,172.1 283.1,172.1" fill="#40434a"/>
<polygon points="281.6,112.4 283.3,112.4 286.0,172.1 284.3,172.1" fill="#2a2c31"/>
<polygon points="286.8,114.2 288.1,114.2 290.7,175.5 289.5,175.5" fill="#40434a"/>
<polygon points="288.1,114.2 289.8,114.2 292.5,175.5 290.7,175.5" fill="#2a2c31"/>
<polygon points="293.2,116.0 294.5,116.0 297.0,178.9 295.7,178.9" fill="#40434a"/>
<polygon points="294.5,116.0 296.2,116.0 298.8,178.9 297.0,178.9" fill="#2a2c31"/>
<polygon points="300.1,118.0 301.5,118.0 303.8,182.6 302.5,182.6" fill="#40434a"/>
<polygon points="301.5,118.0 303.2,118.0 305.6,182.6 303.8,182.6" fill="#2a2c31"/>
<polygon points="231.0,93.7 317.2,117.3 317.2,123.4 231.0,99.0" fill="#40434a"/>
<polygon points="235.6,144.8 309.7,184.6 309.7,190.5 236.0,149.0" fill="#40434a"/>
<path d="M231 94.2L317.2 117.8" stroke="#4b4e56" stroke-width="1.2"/>
<path d="M235.6 145.3L309.7 185.1" stroke="#4b4e56" stroke-width="1"/>
<polygon points="325.1,127.8 327.1,127.8 328.8,197.8 326.9,197.8" fill="#40434a"/>
<polygon points="327.1,127.8 328.6,127.8 330.4,197.8 328.8,197.8" fill="#2a2c31"/>
<polygon points="333.3,130.4 335.4,130.4 336.9,202.3 334.8,202.3" fill="#40434a"/>
<polygon points="335.4,130.4 337.1,130.4 338.6,202.3 336.9,202.3" fill="#2a2c31"/>
<polygon points="342.4,133.4 344.7,133.4 345.9,207.4 343.7,207.4" fill="#40434a"/>
<polygon points="344.7,133.4 346.6,133.4 347.8,207.4 345.9,207.4" fill="#2a2c31"/>
<polygon points="352.5,136.6 354.9,136.6 355.8,212.9 353.4,212.9" fill="#40434a"/>
<polygon points="354.9,136.6 356.9,136.6 357.8,212.9 355.8,212.9" fill="#2a2c31"/>
<polygon points="363.1,140.0 365.7,140.0 366.3,218.7 363.6,218.7" fill="#40434a"/>
<polygon points="365.7,140.0 367.9,140.0 368.4,218.7 366.3,218.7" fill="#2a2c31"/>
<polygon points="374.7,143.7 377.5,143.7 377.5,224.9 374.7,224.9" fill="#40434a"/>
<polygon points="377.5,143.7 379.7,143.7 379.8,224.9 377.5,224.9" fill="#2a2c31"/>
<polygon points="386.9,147.7 389.9,147.7 389.4,231.6 386.5,231.6" fill="#40434a"/>
<polygon points="389.9,147.7 392.3,147.7 391.9,231.6 389.4,231.6" fill="#2a2c31"/>
<polygon points="400.3,152.0 403.5,152.0 402.5,238.8 399.3,238.8" fill="#40434a"/>
<polygon points="403.5,152.0 406.1,152.0 405.0,238.8 402.5,238.8" fill="#2a2c31"/>
<polygon points="415.2,156.7 418.5,156.7 416.8,246.8 413.5,246.8" fill="#40434a"/>
<polygon points="418.5,156.7 421.2,156.7 419.5,246.8 416.8,246.8" fill="#2a2c31"/>
<polygon points="431.2,161.9 434.7,161.9 432.2,255.4 428.7,255.4" fill="#40434a"/>
<polygon points="434.7,161.9 437.6,161.9 435.0,255.4 432.2,255.4" fill="#2a2c31"/>
<polygon points="448.6,167.4 452.2,167.4 448.7,264.6 445.1,264.6" fill="#40434a"/>
<polygon points="452.2,167.4 455.2,167.4 451.7,264.6 448.7,264.6" fill="#2a2c31"/>
<polygon points="468.3,173.7 472.1,173.7 467.5,275.1 463.7,275.1" fill="#40434a"/>
<polygon points="472.1,173.7 475.3,173.7 470.6,275.1 467.5,275.1" fill="#2a2c31"/>
<polygon points="489.7,180.5 493.7,180.5 487.7,286.3 483.7,286.3" fill="#40434a"/>
<polygon points="493.7,180.5 496.9,180.5 491.0,286.3 487.7,286.3" fill="#2a2c31"/>
<polygon points="513.2,188.1 517.4,188.1 509.8,298.7 505.6,298.7" fill="#40434a"/>
<polygon points="517.4,188.1 520.8,188.1 513.2,298.7 509.8,298.7" fill="#2a2c31"/>
<polygon points="318.1,118.0 523.5,178.4 522.8,190.9 318.1,126.0" fill="#40434a"/>
<polygon points="315.7,189.6 512.9,299.6 512.5,311.4 315.7,196.6" fill="#40434a"/>
<path d="M318.1 118.5L523.5 178.9" stroke="#4b4e56" stroke-width="1.2"/>
<path d="M315.7 190.1L512.9 300.1" stroke="#4b4e56" stroke-width="1"/>
<polygon points="229.1,93.6 234.6,93.3 240.0,163.4 238.0,164.2 235.0,164.2 233.4,163.4" fill="#3f434b"/>
<polygon points="232.6,93.4 234.6,93.3 240.0,163.4 238.0,164.2 237.2,164.2" fill="#33363c"/>
<polygon points="308.3,116.9 318.1,117.1 321.2,216.6 319.0,217.6 313.0,217.6 310.8,216.6" fill="#41454d"/>
<polygon points="314.6,117.1 318.1,117.1 321.2,216.6 319.0,217.6 317.5,217.6" fill="#33363c"/>
<path d="M522.8 180 Q523 177.6 527 177.4 L539 177.8 Q542.8 178.2 542.7 181 L528.7 350 Q528 354.8 519.5 354.8 Q510.5 354.6 510 350 Z" fill="url(#post)"/>
<path d="M523 179.6 Q523.4 177.6 527 177.4 L539 177.8 Q542.6 178.2 542.6 180.4 Q533 182.2 523 179.6Z" fill="#4f535c"/>
</svg>
<svg class="abs" style="left:148px;top:63px" width="451" height="309" viewBox="148 63 451 309"><rect x="149.7" y="63.9" width="22.6" height="78" rx="1.6" fill="#1e1e1e"/><path d="M157 67H165M157 68.6H165" stroke="#484848" stroke-width="0.8"/><rect x="151.3" y="73.4" width="19.7" height="9.9" rx="0.8" fill="#3e5d89"/><rect x="151.3" y="84.6" width="19.7" height="9.9" rx="0.8" fill="#565656"/><rect x="151.3" y="95.8" width="19.7" height="9.9" rx="0.8" fill="#565656"/><rect x="151.3" y="107.1" width="19.7" height="9.9" rx="0.8" fill="#565656"/><rect x="151.3" y="118.4" width="19.7" height="9.9" rx="0.8" fill="#565656"/><rect x="151.3" y="129.6" width="19.7" height="9.9" rx="0.8" fill="#565656"/><path d="M156.4 78.3Q161.1 73.6 165.8 78.3Q161.1 83 156.4 78.3Z" fill="none" stroke="#f4f6f8" stroke-width="0.9"/><circle cx="161.1" cy="78.3" r="1.7" fill="#f4f6f8"/><path d="M161.1 85.9V93.1M157.5 89.5H164.7" stroke="#c8c8c8" stroke-width="0.7" stroke-dasharray="1.4 1"/><path d="M160.1 86.5L161.1 85.3L162.1 86.5ZM160.1 92.5L161.1 93.7L162.1 92.5ZM158.1 88.5L156.9 89.5L158.1 90.5ZM164.1 88.5L165.3 89.5L164.1 90.5Z" fill="#c8c8c8"/><path d="M158 101.2A3.2 3.2 0 0 1 163.4 98.5" fill="none" stroke="#c8c8c8" stroke-width="0.8"/><path d="M164.2 100.39999999999999A3.2 3.2 0 0 1 158.8 103.1" fill="none" stroke="#c8c8c8" stroke-width="0.8"/><path d="M162.6 97.2L164.6 98.6L162.4 99.39999999999999ZM159.6 104.39999999999999L157.6 103.0L159.8 102.2Z" fill="#c8c8c8"/><rect x="157.6" y="108.6" width="7" height="7" fill="none" stroke="#c8c8c8" stroke-width="0.8"/><path d="M159.4 113.89999999999999L162.8 110.5M161 110.3H163V112.3" stroke="#c8c8c8" stroke-width="0.7" fill="none"/><rect x="158.4" y="113.1" width="1.6" height="1.6" fill="#c8c8c8"/><rect x="158" y="120.1" width="6.4" height="6.4" fill="none" stroke="#c8c8c8" stroke-width="0.7" stroke-dasharray="1.2 0.9"/><rect x="157.2" y="119.3" width="1.6" height="1.6" fill="#c8c8c8"/><rect x="157.2" y="125.7" width="1.6" height="1.6" fill="#c8c8c8"/><rect x="163.6" y="119.3" width="1.6" height="1.6" fill="#c8c8c8"/><rect x="163.6" y="125.7" width="1.6" height="1.6" fill="#c8c8c8"/><circle cx="161" cy="134.9" r="3" fill="none" stroke="#c8c8c8" stroke-width="0.7"/><ellipse cx="161" cy="134.9" rx="1.3" ry="3" fill="none" stroke="#c8c8c8" stroke-width="0.6"/><path d="M158 134.9H164M157.6 138.2L165 131.2" stroke="#c8c8c8" stroke-width="0.6" stroke-dasharray="1.2 0.8"/><path d="M163.8 130.79999999999998H165.4V132.4" fill="none" stroke="#c8c8c8" stroke-width="0.6"/><path d="M543.4 67.1H551.8M543.4 69H551.8" stroke="#737a7a" stroke-width="0.9"/><path d="M566.4 75.6L573.4 75.6L570.4 87.6H569.6Z" fill="#84cc3a"/><ellipse cx="569.9" cy="75.6" rx="3.5" ry="1" fill="#a6e458"/><path d="M554.6 88.4L554.6 95.8L567 91Z" fill="#2f6fe8"/><ellipse cx="554.7" cy="92.1" rx="1.1" ry="3.7" fill="#2a5cc4"/><path d="M561.4 85.4L564 84.8L567.4 89.4L564.2 89.6Z" fill="#dc4630"/><path d="M573.4 90L581.6 87.2Q583 89.2 582 91.6L573.4 91.2Z" fill="#f0f0f0"/><ellipse cx="578.9" cy="95.3" rx="3.2" ry="4.4" transform="rotate(28 578.9 95.3)" fill="#dedede"/><path d="M569.2 94.6H571L572.8 103.2Q570 105.2 567 103.2Z" fill="#f4f4f4"/><rect x="567" y="87.6" width="6.6" height="7.6" rx="0.6" fill="#d2d2d2"/><rect x="567" y="87.6" width="6.6" height="1.6" rx="0.6" fill="#ececec"/><rect x="585" y="73.6" width="3" height="2.5" fill="#b4bcbc"/><path d="M585.6 73.6V72.8Q585.6 71.8 586.5 71.8Q587.4 71.8 587.4 72.8V73.6" fill="none" stroke="#b4bcbc" stroke-width="0.6"/><path d="M561.2 115.6L557 117.4L561.2 119.2M561.2 117.4H557.4" fill="none" stroke="#dcdcdc" stroke-width="0.65"/></svg><span class="abs t" style="left:563.1px;top:112.6px;line-height:10px;font-size:6.9px;color:#dcdcdc;transform:scaleX(0.99)">Persp</span><span class="abs t" style="left:567.8px;top:67.2px;line-height:8px;font-size:5px;color:#f0f0f0">y</span><span class="abs t" style="left:559.2px;top:80.8px;line-height:8px;font-size:4.6px;color:#f0f0f0">x</span><span class="abs t" style="left:549px;top:88.6px;line-height:8px;font-size:5px;color:#f0f0f0">z</span>
<div class="abs" style="left:600.2px;top:39px;width:424px;height:499px;background:#383838;"></div>
<div class="abs" style="left:600.2px;top:38.9px;width:424px;height:9.5px;background:#282828;"></div>
<div class="abs" style="left:600.3px;top:38.9px;width:55px;height:9.6px;background:#383838;"></div>
<svg class="abs" style="left:604.8px;top:41.3px" width="5.4" height="5.4" viewBox="0 0 5.8 5.8"><circle cx="2.9" cy="2.9" r="2.9" fill="#d0d0d0"/><rect x="2.4" y="2.5" width="1" height="2.2" fill="#383838"/><rect x="2.4" y="1.1" width="1" height="0.9" fill="#383838"/></svg>
<span class="abs t" style="left:613px;top:39.1px;line-height:10px;font-size:6.0px;color:#dcdcdc;font-weight:500;transform:scaleX(0.805);">インスペクター</span>
<svg class="abs" style="left:1005.3px;top:41px" width="5.6" height="6.2" viewBox="0 0 5.6 6.2"><rect x="0.5" y="2.9" width="4.6" height="2.8" rx="0.7" fill="none" stroke="#c4c4c4" stroke-width="0.95"/><path d="M0.9 1.4Q1.3 0.5 2.8 0.5Q4.6 0.5 4.6 2V2.9" fill="none" stroke="#c4c4c4" stroke-width="0.95"/></svg>
<svg class="abs" style="left:1015.9px;top:41.2px" width="1.4" height="5.8" viewBox="0 0 1.4 5.8"><rect x="0" y="0" width="1.4" height="1.25" fill="#cecece"/><rect x="0" y="2" width="1.4" height="1.25" fill="#cecece"/><rect x="0" y="4" width="1.4" height="1.25" fill="#cecece"/></svg>
<div class="abs" style="left:600.2px;top:48.4px;width:424px;height:28.2px;background:#3c3c3c;"></div>
<div class="abs" style="left:600.2px;top:76.6px;width:424px;height:0.8px;background:#1f1f1f;"></div>
<svg class="abs" style="left:605px;top:54.8px" width="13" height="12" viewBox="0 0 13 12"><path d="M0.3 1.4Q0.3 0.4 1.3 0.4H4.4L5.8 1.9H11.7Q12.7 1.9 12.7 2.9V10.4Q12.7 11.4 11.7 11.4H1.3Q0.3 11.4 0.3 10.4Z" fill="#cfcfcf"/></svg>
<span class="abs t" style="left:624.4px;top:51.4px;line-height:10px;font-size:7.0px;color:#9c9c9c;transform:scaleX(1.121);">Texture (Default Asset)</span>
<svg class="abs" style="left:1007.8px;top:53px" width="6" height="6" viewBox="0 0 6 6"><circle cx="3" cy="3" r="3" fill="#c4c4c4"/><path d="M2 2.3Q2.1 1.3 3 1.3Q4 1.3 4 2.2Q4 2.8 3 3.3V3.8" fill="none" stroke="#3c3c3c" stroke-width="0.8"/><rect x="2.6" y="4.3" width="0.8" height="0.8" fill="#3c3c3c"/></svg>
<svg class="abs" style="left:1018.7px;top:53.2px" width="1.4" height="5.8" viewBox="0 0 1.4 5.8"><rect x="0" y="0" width="1.4" height="1.25" fill="#cecece"/><rect x="0" y="2" width="1.4" height="1.25" fill="#cecece"/><rect x="0" y="4" width="1.4" height="1.25" fill="#cecece"/></svg>
<div class="abs" style="left:1005.8px;top:63.6px;width:15.6px;height:8px;background:#585858;border-radius:1.5px"></div>
<span class="abs t" style="left:1008.2px;top:62.7px;line-height:10px;font-size:5.8px;color:#e4e4e4;transform:scaleX(0.948);">開く</span>
<div class="abs" style="left:600.2px;top:500.1px;width:424px;height:0.7px;background:#282828;"></div>
<div class="abs" style="left:600.2px;top:500.8px;width:424px;height:10.5px;background:#3c3c3c;"></div>
<div class="abs" style="left:600.2px;top:511.3px;width:424px;height:0.7px;background:#282828;"></div>
<span class="abs t" style="left:603.4px;top:501.2px;line-height:10px;font-size:6.0px;color:#e6e6e6;font-weight:700;transform:scaleX(0.850);">アセットラベル</span>
<svg class="abs" style="left:1011.6px;top:514.4px" width="8.4" height="8.4" viewBox="0 0 8.4 8.4"><circle cx="4.2" cy="4.2" r="4.2" fill="#3565b0"/><path d="M2 2H4.4L6.8 4.4L4.4 6.8L2 4.4Z" fill="#e8eef8"/><circle cx="3.1" cy="3.1" r="0.55" fill="#3565b0"/></svg>
<span class="abs t" style="left:602.2px;top:526.5px;line-height:10px;font-size:6.0px;color:#c4c4c4;transform:scaleX(0.789);">アセットバンドル</span>
<div class="abs" style="left:651px;top:526.8px;width:286.5px;height:8.6px;background:#515151;border-radius:1.5px;box-shadow:0 0 0 0.5px #2f2f2f"></div>
<span class="abs t" style="left:653px;top:526.2px;line-height:10px;font-size:6.3px;color:#dcdcdc;">None</span>
<svg class="abs" style="left:930.5px;top:530px" width="3.4" height="2.04" viewBox="0 0 3.4 2.04"><path d="M0 0H3.4L1.7 2.04Z" fill="#c4c4c4"/></svg>
<div class="abs" style="left:940.5px;top:526.8px;width:80px;height:8.6px;background:#515151;border-radius:1.5px;box-shadow:0 0 0 0.5px #2f2f2f"></div>
<span class="abs t" style="left:942.5px;top:526.2px;line-height:10px;font-size:6.3px;color:#dcdcdc;">None</span>
<svg class="abs" style="left:1014px;top:530px" width="3.4" height="2.04" viewBox="0 0 3.4 2.04"><path d="M0 0H3.4L1.7 2.04Z" fill="#c4c4c4"/></svg>
<div class="abs" style="left:0px;top:373.6px;width:599px;height:164.4px;background:#383838;"></div>
<div class="abs" style="left:0px;top:373.6px;width:599px;height:10.4px;background:#282828;"></div>
<div class="abs" style="left:0px;top:373.6px;width:48px;height:10.4px;background:#383838;"></div>
<svg class="abs" style="left:3.9px;top:376.20000000000005px" width="6.8" height="5.6" viewBox="0 0 8 7"><path d="M0.2 0.9Q0.2 0.3 0.8 0.3H2.8L3.6 1.2H7Q7.6 1.2 7.6 1.8V5.9Q7.6 6.5 7 6.5H0.8Q0.2 6.5 0.2 5.9Z" fill="#d0d0d0"/></svg>
<span class="abs t" style="left:12.2px;top:374.0px;line-height:10px;font-size:6.0px;color:#dedede;font-weight:500;transform:scaleX(0.772);">プロジェクト</span>
<svg class="abs" style="left:53.6px;top:375.6px" width="5.6" height="6.2" viewBox="0 0 7 7.5"><rect x="0.4" y="0.4" width="6" height="6.6" rx="0.8" fill="#c8c8c8"/><path d="M1.6 2.2H5.2M1.6 3.7H5.2M1.6 5.2H5.2" stroke="#282828" stroke-width="0.7"/></svg>
<span class="abs t" style="left:61.8px;top:374.0px;line-height:10px;font-size:6.0px;color:#c8c8c8;font-weight:500;transform:scaleX(0.813);">コンソール</span>
<svg class="abs" style="left:580.3px;top:375.4px" width="5.6" height="6.2" viewBox="0 0 5.6 6.2"><rect x="0.5" y="2.9" width="4.6" height="2.8" rx="0.7" fill="none" stroke="#c4c4c4" stroke-width="0.95"/><path d="M0.9 1.4Q1.3 0.5 2.8 0.5Q4.6 0.5 4.6 2V2.9" fill="none" stroke="#c4c4c4" stroke-width="0.95"/></svg>
<svg class="abs" style="left:590.9px;top:376px" width="1.4" height="5.8" viewBox="0 0 1.4 5.8"><rect x="0" y="0" width="1.4" height="1.25" fill="#cecece"/><rect x="0" y="2" width="1.4" height="1.25" fill="#cecece"/><rect x="0" y="4" width="1.4" height="1.25" fill="#cecece"/></svg>
<div class="abs" style="left:0px;top:384px;width:599px;height:10px;background:#383838;"></div>
<div class="abs" style="left:0px;top:394px;width:599px;height:0.6px;background:#262626;"></div>
<svg class="abs" style="left:3.8px;top:386.1px" width="6" height="6" viewBox="0 0 6 6"><path d="M3 0V6M0 3H6" stroke="#e2e2e2" stroke-width="1.3"/></svg>
<svg class="abs" style="left:12.5px;top:388.1px" width="3.7" height="2.22" viewBox="0 0 3.7 2.22"><path d="M0 0H3.7L1.85 2.22Z" fill="#cccccc"/></svg>
<div class="abs" style="left:368.3px;top:385px;width:160.7px;height:7.8px;background:#2a2a2a;border-radius:2px;box-shadow:0 0 0 0.5px #212121 inset"></div>
<svg class="abs" style="left:370.6px;top:386.6px" width="4.62" height="4.62" viewBox="0 0 7 7"><circle cx="2.6" cy="2.6" r="2" fill="none" stroke="#d0d0d0" stroke-width="0.9"/><path d="M4.1 4.1L6.4 6.4" stroke="#d0d0d0" stroke-width="1.1"/></svg>
<svg class="abs" style="left:0px;top:373px" width="600" height="30" viewBox="0 373 600 30"><rect x="540" y="384.2" width="13.2" height="9.7" fill="#3e3e3e"/><rect x="554" y="384.2" width="13.2" height="9.7" fill="#3e3e3e"/><rect x="568" y="384.2" width="12.6" height="9.7" fill="#3e3e3e"/><rect x="581.4" y="384.2" width="17.6" height="9.7" fill="#3e3e3e"/><rect x="531.4" y="386.2" width="5.4" height="5.2" rx="1" fill="none" stroke="#c8c8c8" stroke-width="0.8"/><rect x="533.6" y="388" width="1.6" height="1.6" fill="#c8c8c8"/><circle cx="531.2" cy="391.6" r="1.1" fill="#383838" stroke="#c8c8c8" stroke-width="0.7"/><rect x="543.4" y="385.6" width="2.8" height="2.6" fill="#c8c8c8"/><circle cx="544.8" cy="390.7" r="1.6" fill="#c8c8c8"/><path d="M546.8 387.2L549.4 390.8L546.6 389.6Z" fill="#c8c8c8"/><path d="M559.8 386H562.6V388.8L559.4 392L556.8 389.2Z" fill="#c8c8c8"/><circle cx="561.5" cy="387.1" r="0.5" fill="#3e3e3e"/><path d="M574.1 385.6L575.1 387.9L577.5 388.1L575.7 389.7L576.3 392.1L574.1 390.8L571.9 392.1L572.5 389.7L570.7 388.1L573.1 387.9Z" fill="#8e8e8e"/><path d="M584 389.2Q587.4 385.6 590.8 389.2Q587.4 392.6 584 389.2Z" fill="none" stroke="#c8c8c8" stroke-width="0.8"/><circle cx="587.4" cy="389.2" r="1" fill="#c8c8c8"/><path d="M584.4 392.2L590.4 386" stroke="#c8c8c8" stroke-width="0.8"/></svg><span class="abs t" style="left:592.1px;top:384px;line-height:10px;font-size:8.2px;color:#c8c8c8;transform:scaleX(0.85)">6</span>
<div class="abs" style="left:129.3px;top:394.6px;width:0.9px;height:143.4px;background:#232323;"></div>
<div class="abs" style="left:130.2px;top:394.6px;width:468.8px;height:143.4px;background:#333333;"></div>
<div class="abs" style="left:130.2px;top:394.6px;width:468.8px;height:10.6px;background:#3f3f3f;"></div>
<div class="abs" style="left:0px;top:428.6px;width:129.3px;height:8.6px;background:#4d4d4d;"></div>
<svg class="abs" style="left:3px;top:397.1px" width="3.456" height="4.8" viewBox="0 0 3.456 4.8"><path d="M0 0L3.456 2.4L0 4.8Z" fill="#6c6c6c"/></svg>
<svg class="abs" style="left:9.7px;top:396.3px" width="7" height="7" viewBox="0 0 7 7"><path d="M3.5 0.2L4.5 2.5L7 2.7L5.1 4.3L5.7 6.7L3.5 5.4L1.3 6.7L1.9 4.3L0 2.7L2.5 2.5Z" fill="#e0e0e0"/></svg>
<span class="abs t" style="left:18.7px;top:394.6px;line-height:10px;font-size:6.5px;color:#dedede;font-weight:700;transform:scaleX(1.090);">Favorites</span>
<svg class="abs" style="left:2.5px;top:414.09999999999997px" width="4.6" height="3.8" viewBox="0 0 4.6 3.8"><path d="M0 0H4.6L2.3 3.8Z" fill="#6c6c6c"/></svg>
<svg class="abs" style="left:9.2px;top:413.1px" width="7.4" height="5.7" viewBox="0 0 8.6 7"><path d="M0.2 0.9Q0.2 0.3 0.8 0.3H2.8L3.6 1.2H6.4Q7 1.2 7 1.8V2.6H1.9L0.2 5.6Z" fill="#d0d0d0"/><path d="M2.2 3.1H8.4L6.8 6.5H0.5Z" fill="#d0d0d0"/></svg>
<span class="abs t" style="left:18.7px;top:411.2px;line-height:10px;font-size:6.5px;color:#dedede;font-weight:700;transform:scaleX(1.032);">Assets</span>
<svg class="abs" style="left:10.0px;top:422.59999999999997px" width="4.6" height="3.8" viewBox="0 0 4.6 3.8"><path d="M0 0H4.6L2.3 3.8Z" fill="#6c6c6c"/></svg>
<svg class="abs" style="left:16.7px;top:421.6px" width="7.4" height="5.7" viewBox="0 0 8.6 7"><path d="M0.2 0.9Q0.2 0.3 0.8 0.3H2.8L3.6 1.2H6.4Q7 1.2 7 1.8V2.6H1.9L0.2 5.6Z" fill="#d0d0d0"/><path d="M2.2 3.1H8.4L6.8 6.5H0.5Z" fill="#d0d0d0"/></svg>
<span class="abs t" style="left:26.2px;top:419.7px;line-height:10px;font-size:6.4px;color:#d0d0d0;transform:scaleX(1.005);">FBX</span>
<svg class="abs" style="left:18px;top:430.7px" width="3.456" height="4.8" viewBox="0 0 3.456 4.8"><path d="M0 0L3.456 2.4L0 4.8Z" fill="#6c6c6c"/></svg>
<svg class="abs" style="left:24.3px;top:430.0px" width="6.8" height="5.6" viewBox="0 0 8 7"><path d="M0.2 0.9Q0.2 0.3 0.8 0.3H2.8L3.6 1.2H7Q7.6 1.2 7.6 1.8V5.9Q7.6 6.5 7 6.5H0.8Q0.2 6.5 0.2 5.9Z" fill="#d4d4d4"/></svg>
<span class="abs t" style="left:32.900000000000006px;top:428.2px;line-height:10px;font-size:6.4px;color:#d0d0d0;transform:scaleX(1.202);">Texture</span>
<svg class="abs" style="left:16.8px;top:438.6px" width="6.8" height="5.6" viewBox="0 0 8 7"><path d="M0.6 1.2Q0.6 0.7 1.1 0.7H2.7L3.5 1.6H6.7Q7.2 1.6 7.2 2.1V5.7Q7.2 6.2 6.7 6.2H1.1Q0.6 6.2 0.6 5.7Z" fill="none" stroke="#d0d0d0" stroke-width="0.9"/></svg>
<span class="abs t" style="left:26.2px;top:436.7px;line-height:10px;font-size:6.4px;color:#d0d0d0;transform:scaleX(1.088);">Prefab</span>
<svg class="abs" style="left:10.5px;top:447.7px" width="3.456" height="4.8" viewBox="0 0 3.456 4.8"><path d="M0 0L3.456 2.4L0 4.8Z" fill="#6c6c6c"/></svg>
<svg class="abs" style="left:16.8px;top:447.0px" width="6.8" height="5.6" viewBox="0 0 8 7"><path d="M0.2 0.9Q0.2 0.3 0.8 0.3H2.8L3.6 1.2H7Q7.6 1.2 7.6 1.8V5.9Q7.6 6.5 7 6.5H0.8Q0.2 6.5 0.2 5.9Z" fill="#d4d4d4"/></svg>
<span class="abs t" style="left:26.2px;top:445.2px;line-height:10px;font-size:6.4px;color:#d0d0d0;transform:scaleX(1.079);">QuickOutline</span>
<svg class="abs" style="left:16.8px;top:455.6px" width="6.8" height="5.6" viewBox="0 0 8 7"><path d="M0.2 0.9Q0.2 0.3 0.8 0.3H2.8L3.6 1.2H7Q7.6 1.2 7.6 1.8V5.9Q7.6 6.5 7 6.5H0.8Q0.2 6.5 0.2 5.9Z" fill="#d4d4d4"/></svg>
<span class="abs t" style="left:26.2px;top:453.8px;line-height:10px;font-size:6.4px;color:#d0d0d0;transform:scaleX(1.032);">Scenes</span>
<svg class="abs" style="left:10.5px;top:464.8px" width="3.456" height="4.8" viewBox="0 0 3.456 4.8"><path d="M0 0L3.456 2.4L0 4.8Z" fill="#6c6c6c"/></svg>
<svg class="abs" style="left:16.8px;top:464.1px" width="6.8" height="5.6" viewBox="0 0 8 7"><path d="M0.2 0.9Q0.2 0.3 0.8 0.3H2.8L3.6 1.2H7Q7.6 1.2 7.6 1.8V5.9Q7.6 6.5 7 6.5H0.8Q0.2 6.5 0.2 5.9Z" fill="#d4d4d4"/></svg>
<span class="abs t" style="left:25.4px;top:462.3px;line-height:10px;font-size:6.4px;color:#d0d0d0;transform:scaleX(1.147);">Toon</span>
<svg class="abs" style="left:3px;top:473.3px" width="3.456" height="4.8" viewBox="0 0 3.456 4.8"><path d="M0 0L3.456 2.4L0 4.8Z" fill="#6c6c6c"/></svg>
<svg class="abs" style="left:9.3px;top:472.6px" width="6.8" height="5.6" viewBox="0 0 8 7"><path d="M0.2 0.9Q0.2 0.3 0.8 0.3H2.8L3.6 1.2H7Q7.6 1.2 7.6 1.8V5.9Q7.6 6.5 7 6.5H0.8Q0.2 6.5 0.2 5.9Z" fill="#d4d4d4"/></svg>
<span class="abs t" style="left:18.7px;top:470.8px;line-height:10px;font-size:6.5px;color:#dedede;font-weight:700;transform:scaleX(1.083);">Packages</span>
<span class="abs t" style="left:131.5px;top:394.8px;line-height:10px;font-size:6.4px;color:#b8b8b8;transform:scaleX(1.068);">Assets</span>
<svg class="abs" style="left:154.8px;top:397.6px" width="3.6" height="5" viewBox="0 0 3.6 5"><path d="M0.5 0.5L3 2.4L0.5 4.3" fill="none" stroke="#a8a8a8" stroke-width="0.8"/></svg>
<span class="abs t" style="left:161.5px;top:394.8px;line-height:10px;font-size:6.4px;color:#b8b8b8;transform:scaleX(1.005);">FBX</span>
<svg class="abs" style="left:176.6px;top:397.6px" width="3.6" height="5" viewBox="0 0 3.6 5"><path d="M0.5 0.5L3 2.4L0.5 4.3" fill="none" stroke="#a8a8a8" stroke-width="0.8"/></svg>
<span class="abs t" style="left:183.5px;top:394.8px;line-height:10px;font-size:6.5px;color:#dedede;font-weight:700;transform:scaleX(1.152);">Texture</span>
<svg class="abs" style="left:139.10000000000002px;top:408.0px" width="6.8" height="5.6" viewBox="0 0 8 7"><path d="M0.2 0.9Q0.2 0.3 0.8 0.3H2.8L3.6 1.2H7Q7.6 1.2 7.6 1.8V5.9Q7.6 6.5 7 6.5H0.8Q0.2 6.5 0.2 5.9Z" fill="#d0d0d0"/></svg>
<span class="abs t" style="left:148px;top:405.7px;line-height:10px;font-size:6.4px;color:#d0d0d0;transform:scaleX(1.099);">Materials</span>
<div class="abs" style="left:138.1px;top:414.6px;width:8.5px;height:7.9px;background:#181818;"></div>
<span class="abs t" style="left:148px;top:414.7px;line-height:10px;font-size:6.4px;color:#d0d0d0;transform:scaleX(1.022);">TEX_Fence</span>
<div class="abs" style="left:130.2px;top:527.6px;width:468.8px;height:10.4px;background:#3c3c3c;"></div>
<svg class="abs" style="left:132.3px;top:530.0px" width="6.8" height="5.6" viewBox="0 0 8 7"><path d="M0.2 0.9Q0.2 0.3 0.8 0.3H2.8L3.6 1.2H7Q7.6 1.2 7.6 1.8V5.9Q7.6 6.5 7 6.5H0.8Q0.2 6.5 0.2 5.9Z" fill="#d0d0d0"/></svg>
<span class="abs t" style="left:140px;top:527.8px;line-height:10px;font-size:6.4px;color:#c8c8c8;transform:scaleX(1.122);">Assets/FBX/Texture</span>
<div class="abs" style="left:562px;top:532.4px;width:28.5px;height:0.8px;background:#5a5a5a;"></div>
<div class="abs" style="left:560.6px;top:530.2px;width:5.2px;height:5.2px;background:#bdbdbd;border-radius:50%"></div>
<div class="abs" style="left:0px;top:538px;width:1024px;height:12px;background:#191919;"></div>
<svg class="abs" style="left:0px;top:538px" width="1024" height="12" viewBox="0 538 1024 12"><ellipse cx="974.4" cy="545.0999999999999" rx="2.5" ry="3" fill="#d4d4d4"/><circle cx="974.4" cy="542.1999999999999" r="1.3" fill="#d4d4d4"/><path d="M970.4 543.0L972.4 544.1999999999999M978.4 543.0L976.4 544.1999999999999M970.3 545.5999999999999H978.5M970.6 548.1999999999999L972.4 546.8M978.1999999999999 548.1999999999999L976.4 546.8" stroke="#d4d4d4" stroke-width="0.7"/><path d="M971.6 541.4L978.0 549.0" stroke="#191919" stroke-width="1.1"/><path d="M970.5 541.1999999999999L977.3 549.0" stroke="#d4d4d4" stroke-width="0.7"/><ellipse cx="988.4" cy="542.2" rx="3.4" ry="1.3" fill="#d4d4d4"/><path d="M985.0 543.3000000000001Q988.4 545.2 991.8 543.3000000000001V545.2Q988.4 547.1 985.0 545.2Z" fill="#d4d4d4"/><path d="M985.0 546.0Q988.4 547.9 991.8 546.0V547.4Q988.4 549.3000000000001 985.0 547.4Z" fill="#d4d4d4"/><path d="M985.8 543.2L992.1999999999999 549.0" stroke="#191919" stroke-width="1.1"/><path d="M984.8 543.0L991.4 549.0" stroke="#d4d4d4" stroke-width="0.7"/><path d="M999.6 545.2A3 3 0 0 1 1004.8000000000001 542.6" fill="none" stroke="#d4d4d4" stroke-width="1.1"/><path d="M1005.6 544.0A3 3 0 0 1 1000.4 546.6" fill="none" stroke="#d4d4d4" stroke-width="1.1"/><path d="M1003.8000000000001 540.8000000000001L1006.4 542.0L1004.2 543.8000000000001ZM1001.4 548.4L998.8000000000001 547.2L1001.0 545.4Z" fill="#d4d4d4"/><circle cx="1002.6" cy="544.6" r="1.1" fill="#d4d4d4"/><path d="M1000.0 541.4L1006.4 548.6" stroke="#191919" stroke-width="1.1"/><path d="M999.0 541.2L1005.6 548.6" stroke="#d4d4d4" stroke-width="0.7"/><circle cx="1016.4" cy="544.7" r="3.7" fill="none" stroke="#8a8a8a" stroke-width="1"/><path d="M1014.7 544.6L1015.9 545.8L1018.1 543.4" fill="none" stroke="#e4e4e4" stroke-width="1"/></svg>
</div>
</body></html>
